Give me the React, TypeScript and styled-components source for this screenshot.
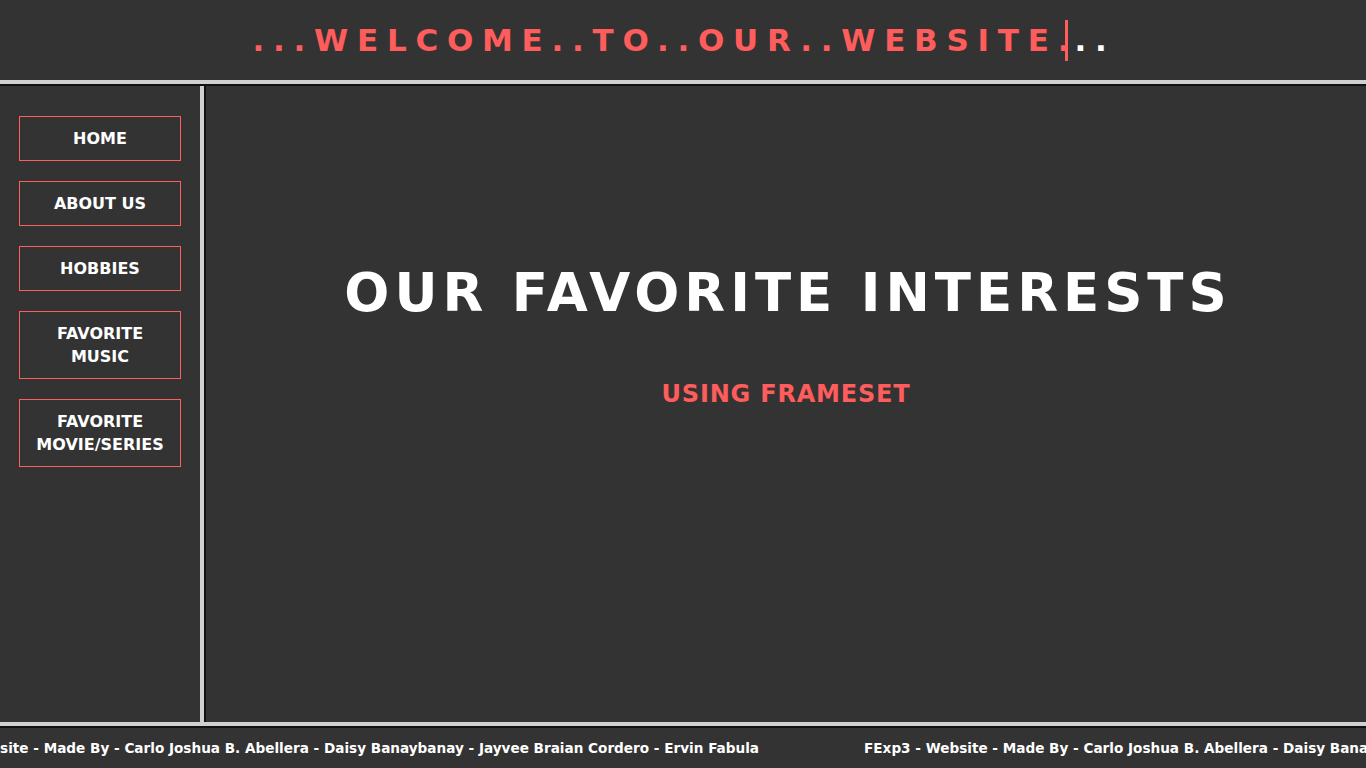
import React from "react";
import styled, { createGlobalStyle } from "styled-components";

const RED = "#ff5c5c";
const BG = "#333333";

const Global = createGlobalStyle`
  html, body { margin: 0; padding: 0; background: ${BG}; overflow: hidden; }
  * { box-sizing: border-box; }
`;

const Frameset = styled.div`
  width: 1366px;
  height: 768px;
  display: grid;
  grid-template-rows: 80px 6px 1fr 6px 40px;
  background: ${BG};
  font-family: "DejaVu Sans", "Liberation Sans", Arial, sans-serif;
`;

const HBorder = styled.div`
  background: #d0d0d0;
  border-bottom: 2px solid #111;
`;

const VBorder = styled.div`
  background: #d0d0d0;
  border-right: 2px solid #111;
`;

const TopFrame = styled.header`
  display: flex;
  align-items: center;
  justify-content: center;
  padding-left: 2px;
`;

const Title = styled.h1`
  margin: 0;
  font-size: 31px;
  font-weight: 700;
  letter-spacing: 8.75px;
  white-space: nowrap;
  display: flex;
  align-items: center;
`;

const Typed = styled.span<{ $tight?: boolean }>`
  color: ${RED};
  letter-spacing: ${(p) => (p.$tight ? "0" : "inherit")};
`;

const Caret = styled.span`
  display: inline-block;
  width: 3px;
  height: 41px;
  background: ${RED};
  margin: 1px 6px 0 -4px;
`;

const Rest = styled.span`
  color: #ffffff;
`;

const Middle = styled.div`
  display: grid;
  grid-template-columns: 200px 6px 1fr;
  min-height: 0;
`;

const Sidebar = styled.nav`
  padding: 30px 19px 0 19px;
  display: flex;
  flex-direction: column;
  gap: 20px;
`;

const NavButton = styled.a`
  display: block;
  width: 162px;
  border: 1px solid ${RED};
  padding: 10px 14px;
  color: #ffffff;
  text-align: center;
  text-decoration: none;
  font-size: 16px;
  line-height: 23px;
  font-weight: 700;
`;

const Main = styled.main`
  display: flex;
  flex-direction: column;
  align-items: center;
  padding-top: 176px;
`;

const Heading = styled.h2`
  margin: 0;
  color: #ffffff;
  font-size: 53px;
  font-weight: 700;
  letter-spacing: 5px;
  padding-left: 4px;
  line-height: 62px;
  white-space: nowrap;
`;

const Sub = styled.h3`
  margin: 56px 0 0 0;
  color: ${RED};
  font-size: 24px;
  font-weight: 700;
  letter-spacing: 0.8px;
  line-height: 29px;
  white-space: nowrap;
`;

const Footer = styled.footer`
  display: flex;
  align-items: center;
  overflow: hidden;
  white-space: nowrap;
`;

const Marquee = styled.div`
  display: flex;
  gap: 105px;
  margin-left: -95px;
`;

const Credit = styled.span`
  color: #ffffff;
  font-size: 13.6px;
  font-weight: 700;
  flex: none;
`;

const NAV = ["HOME", "ABOUT US", "HOBBIES", "FAVORITE MUSIC", "FAVORITE MOVIE/SERIES"];
const CREDIT =
  "FExp3 - Website - Made By - Carlo Joshua B. Abellera - Daisy Banaybanay - Jayvee Braian Cordero - Ervin Fabula";

export default function App() {
  return (
    <>
      <Global />
      <Frameset>
        <TopFrame>
          <Title>
            <Typed>...WELCOME..TO..OUR..WEBSITE</Typed>
            <Typed $tight>.</Typed>
            <Caret />
            <Rest>..</Rest>
          </Title>
        </TopFrame>
        <HBorder />
        <Middle>
          <Sidebar>
            {NAV.map((n) => (
              <NavButton key={n} href="#">
                {n}
              </NavButton>
            ))}
          </Sidebar>
          <VBorder />
          <Main>
            <Heading>OUR FAVORITE INTERESTS</Heading>
            <Sub>USING FRAMESET</Sub>
          </Main>
        </Middle>
        <HBorder />
        <Footer>
          <Marquee>
            <Credit>{CREDIT}</Credit>
            <Credit>{CREDIT}</Credit>
          </Marquee>
        </Footer>
      </Frameset>
    </>
  );
}
